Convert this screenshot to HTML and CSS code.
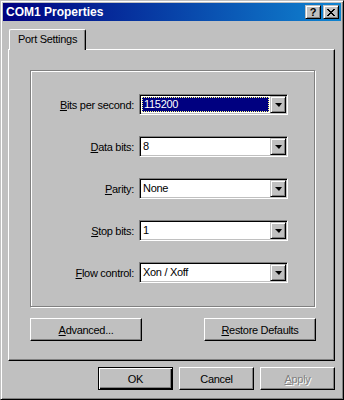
FILE: index.html
```html
<!DOCTYPE html>
<html lang="en">
<head>
    <meta charset="UTF-8">
    <meta name="viewport" content="width=device-width, initial-scale=1.0">
    <title>COM1 Properties</title>
    <link rel="stylesheet" href="styles.css">
</head>
<body>
    <div class="window">
        <div class="titlebar">
            <span class="title">COM1 Properties</span>
            <div class="caption-buttons">
                <div class="cap-btn help">?</div>
                <div class="cap-btn close">
                    <svg width="8" height="7" viewBox="0 0 8 7">
                        <path d="M0 0h2v1h1v1h2v-1h1v-1h2v1h-1v1h-1v1h-1v1h1v1h1v1h1v1h-2v-1h-1v-1h-2v1h-1v1h-2v-1h1v-1h1v-1h1v-1h-1v-1h-1v-1h-1z" fill="#000"/>
                    </svg>
                </div>
            </div>
        </div>

        <div class="tabs">
            <div class="tab active">Port Settings</div>
        </div>

        <div class="panel">
            <div class="group">
                <div class="row">
                    <label class="field-label"><u>B</u>its per second:</label>
                    <div class="combo focused">
                        <div class="combo-value"><span class="selection">115200</span></div>
                        <div class="combo-arrow"><span class="arrow"></span></div>
                    </div>
                </div>
                <div class="row">
                    <label class="field-label"><u>D</u>ata bits:</label>
                    <div class="combo">
                        <div class="combo-value">8</div>
                        <div class="combo-arrow"><span class="arrow"></span></div>
                    </div>
                </div>
                <div class="row">
                    <label class="field-label"><u>P</u>arity:</label>
                    <div class="combo">
                        <div class="combo-value">None</div>
                        <div class="combo-arrow"><span class="arrow"></span></div>
                    </div>
                </div>
                <div class="row">
                    <label class="field-label"><u>S</u>top bits:</label>
                    <div class="combo">
                        <div class="combo-value">1</div>
                        <div class="combo-arrow"><span class="arrow"></span></div>
                    </div>
                </div>
                <div class="row">
                    <label class="field-label"><u>F</u>low control:</label>
                    <div class="combo">
                        <div class="combo-value">Xon / Xoff</div>
                        <div class="combo-arrow"><span class="arrow"></span></div>
                    </div>
                </div>
            </div>

            <div class="panel-buttons">
                <div class="btn wide"><u>A</u>dvanced...</div>
                <div class="btn wide"><u>R</u>estore Defaults</div>
            </div>
        </div>

        <div class="dialog-buttons">
            <div class="btn default">OK</div>
            <div class="btn">Cancel</div>
            <div class="btn disabled"><u>A</u>pply</div>
        </div>
    </div>
</body>
</html>
```

FILE: styles.css
```css
body {
    margin: 0;
    font-family: 'Liberation Sans', Arial, sans-serif;
    font-size: 11px;
    letter-spacing: -0.3px;
    color: #000;
    background-color: #c0c0c0;
}

.window {
    box-sizing: border-box;
    width: 344px;
    height: 400px;
    padding: 2px;
    background-color: #c0c0c0;
    border: 1px solid;
    border-color: #c0c0c0 #000 #000 #c0c0c0;
    box-shadow: inset 1px 1px #fff, inset -1px -1px #808080;
}

/* Barre de titre */
.titlebar {
    height: 18px;
    display: flex;
    align-items: center;
    justify-content: space-between;
    background: linear-gradient(90deg, #000080, #1084d0);
    padding: 0 2px 0 3px;
}

.title {
    color: #fff;
    font-weight: bold;
    font-size: 12px;
    letter-spacing: 0;
}

.caption-buttons {
    display: flex;
    gap: 2px;
}

.cap-btn {
    box-sizing: border-box;
    width: 16px;
    height: 14px;
    background-color: #c0c0c0;
    border: 1px solid;
    border-color: #c0c0c0 #000 #000 #c0c0c0;
    box-shadow: inset 1px 1px #fff, inset -1px -1px #808080;
    display: flex;
    align-items: center;
    justify-content: center;
}

.cap-btn.help {
    font-weight: bold;
    font-size: 11px;
    line-height: 1;
    padding-top: 1px;
}

.cap-btn.close svg {
    display: block;
    margin-top: 1px;
}

/* Onglets */
.tabs {
    display: flex;
    margin-top: 8px;
    padding-left: 6px;
}

.tab {
    box-sizing: border-box;
    width: 77px;
    height: 21px;
    padding: 3px 0 0 8px;
    background-color: #c0c0c0;
    border-left: 1px solid #fff;
    border-top: 1px solid #fff;
    border-right: 1px solid #000;
    border-radius: 2px 2px 0 0;
    box-shadow: inset -1px 0 #808080;
    margin-bottom: -1px;
    position: relative;
    z-index: 1;
}

.panel {
    box-sizing: border-box;
    width: 327px;
    height: 312px;
    margin-left: 5px;
    padding: 20px 0 0 21px;
    border: 1px solid;
    border-color: #fff #000 #000 #fff;
    box-shadow: inset -1px -1px #808080;
}

/* Cadre grave */
.group {
    box-sizing: border-box;
    width: 285px;
    height: 237px;
    border: 1px solid #808080;
    box-shadow: inset 1px 1px #fff, 1px 1px #fff;
    padding-top: 23px;
    display: flex;
    flex-direction: column;
    gap: 21px;
}

.row {
    display: flex;
    align-items: center;
    height: 21px;
}

.field-label {
    width: 103px;
    margin-right: 5px;
    text-align: right;
    white-space: nowrap;
}

.combo {
    box-sizing: border-box;
    width: 149px;
    height: 21px;
    background-color: #fff;
    border: 1px solid;
    border-color: #808080 #fff #fff #808080;
    box-shadow: inset 1px 1px #000, inset -1px -1px #c0c0c0;
    padding: 1px;
    display: flex;
}

.combo-value {
    flex: 1;
    padding-left: 2px;
    line-height: 17px;
}

.combo.focused .combo-value {
    padding: 1px;
}

.selection {
    box-sizing: border-box;
    display: block;
    height: 15px;
    line-height: 13px;
    padding-left: 1px;
    background-color: #000080;
    color: #fff;
    border: 1px dotted #ffff80;
}

.combo-arrow {
    box-sizing: border-box;
    width: 16px;
    height: 17px;
    background-color: #c0c0c0;
    border: 1px solid;
    border-color: #c0c0c0 #000 #000 #c0c0c0;
    box-shadow: inset 1px 1px #fff, inset -1px -1px #808080;
    display: flex;
    align-items: center;
    justify-content: center;
}

.arrow {
    width: 0;
    height: 0;
    border-left: 4px solid transparent;
    border-right: 3px solid transparent;
    border-top: 4px solid #000;
    margin-top: 1px;
}

/* Boutons */
.btn {
    box-sizing: border-box;
    width: 75px;
    height: 23px;
    background-color: #c0c0c0;
    border: 1px solid;
    border-color: #fff #000 #000 #fff;
    box-shadow: inset -1px -1px #808080;
    display: flex;
    align-items: center;
    justify-content: center;
}

.btn.wide {
    width: 112px;
}

.btn.default {
    border-color: #000;
    box-shadow: inset 1px 1px #fff, inset -1px -1px #000, inset -2px -2px #808080;
}

.btn.disabled {
    color: #808080;
    text-shadow: 1px 1px #fff;
}

.panel-buttons {
    display: flex;
    justify-content: space-between;
    width: 286px;
    margin-top: 11px;
}

.dialog-buttons {
    display: flex;
    justify-content: flex-end;
    gap: 6px;
    margin-top: 6px;
    padding-right: 6px;
}
```
